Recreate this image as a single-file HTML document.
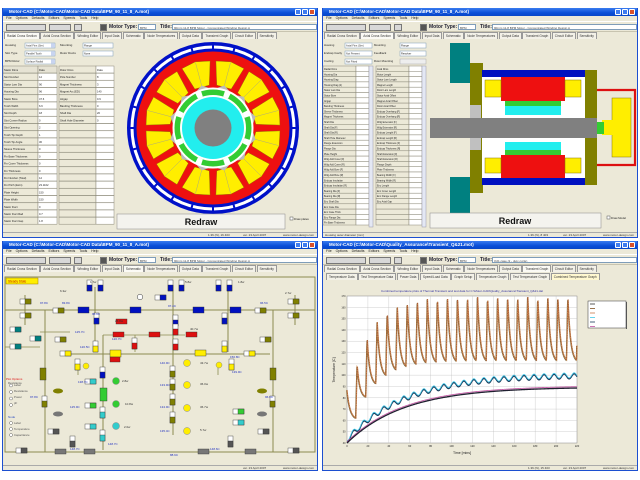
<!DOCTYPE html>
<html><head><meta charset="utf-8">
<style>
*{margin:0;padding:0;box-sizing:border-box}
body{width:640px;height:480px;background:#fff;position:relative;overflow:hidden;font-family:"Liberation Sans",sans-serif}
.q{position:absolute;width:320px;height:240px}
.w{position:absolute;left:2px;width:316px;height:230px;background:#ece9d8;border:1px solid #1c4fd0;border-top:none;overflow:hidden}
.tb{position:absolute;left:0;top:0;width:100%;height:8px;background:linear-gradient(#3a7cf0,#0a4fd8 60%,#0846c8);color:#fff;font-size:4.5px;font-weight:bold;line-height:8px;padding-left:6px;white-space:nowrap}
.tb i{position:absolute;top:1px;width:6px;height:6px;background:#3f7df0;border:0.5px solid #fff;border-radius:1px}
.tb i.x{background:#d8502c}
.mn{position:absolute;top:8px;left:0;width:100%;height:5px;font-size:3.5px;line-height:5px;padding-left:3px;color:#222;word-spacing:3px}
.tl{position:absolute;top:13px;left:0;width:100%;height:11px;border-top:1px solid #fff;border-bottom:1px solid #c8c4b0}
.ic{position:absolute;top:2px;height:7px;background:#d8d8d8;border:0.5px solid #777}
.tl b{position:absolute;top:2px;font-size:5px;line-height:7px;color:#223}
.inp{position:absolute;top:2px;height:6px;background:#fff;border:0.5px solid #7f9db9;font-size:3px;line-height:6px;padding-left:1px;color:#444;white-space:nowrap;overflow:hidden}
.tabs{position:absolute;top:24px;left:1px;height:7px;white-space:nowrap;font-size:3.2px;line-height:6px}
.tabs span{display:inline-block;border:0.5px solid #999;border-bottom:none;padding:0 2px;margin-right:0.5px;height:7px;background:#f3f1e8;color:#333}
.tabs span.a{background:#fbfaf5}
.st{position:absolute;top:224px;left:0;width:100%;height:5px;border-top:0.5px solid #aaa;font-size:3px;line-height:5px;color:#333}
svg{position:absolute;left:0;top:0}
</style></head><body>

<div class="q" style="left:0;top:0">
<div class="w" style="top:8px">
<div class="tb">Motor-CAD (C:\Motor-CAD\Motor-CAD Data\BPM_90_11_8_A.mot)<i style="right:16px"></i><i style="right:9px"></i><i class="x" style="right:2px"></i></div>
<div class="mn">File Options Defaults Editors Speeds Tools Help</div>
<div class="tl"><span class="ic" style="left:3px;width:40px"></span><span class="ic" style="left:46px;width:22px"></span><span class="ic" style="left:71px;width:8px"></span><span class="ic" style="left:97px;width:7px;background:#555"></span><b style="left:106px">Motor Type:</b><span class="inp" style="left:135px;width:18px">BPM</span><b style="left:157px">Title:</b><span class="inp" style="left:169px;width:145px">90mm 11-8 BPM Motor - Concentrated Winding Design A</span></div>
<div class="tabs"><span class="a">Radial Cross Section</span><span>Axial Cross Section</span><span>Winding Editor</span><span>Input Data</span><span>Schematic</span><span>Node Temperatures</span><span>Output Data</span><span>Transient Graph</span><span>Circuit Editor</span><span>Sensitivity</span></div>
<div class="st"><span style="position:absolute;left:205px">1.36 (N), 16 403</span><span style="position:absolute;left:240px">ver. 23 April 2007</span><span style="position:absolute;left:280px">www.motor-design.com</span></div>
</div>
<svg id="s1" width="320" height="240"></svg>
</div>

<div class="q" style="left:320px;top:0">
<div class="w" style="top:8px">
<div class="tb">Motor-CAD (C:\Motor-CAD\Motor-CAD Data\BPM_90_11_8_A.mot)<i style="right:16px"></i><i style="right:9px"></i><i class="x" style="right:2px"></i></div>
<div class="mn">File Options Defaults Editors Speeds Tools Help</div>
<div class="tl"><span class="ic" style="left:3px;width:40px"></span><span class="ic" style="left:46px;width:22px"></span><span class="ic" style="left:71px;width:8px"></span><span class="ic" style="left:97px;width:7px;background:#555"></span><b style="left:106px">Motor Type:</b><span class="inp" style="left:135px;width:18px">BPM</span><b style="left:157px">Title:</b><span class="inp" style="left:169px;width:145px">90mm 11-8 BPM Motor - Concentrated Winding Design A</span></div>
<div class="tabs"><span>Radial Cross Section</span><span class="a">Axial Cross Section</span><span>Winding Editor</span><span>Input Data</span><span>Schematic</span><span>Node Temperatures</span><span>Output Data</span><span>Transient Graph</span><span>Circuit Editor</span><span>Sensitivity</span></div>
<div class="st"><span style="position:absolute;left:2px">Housing outer diameter [mm]</span><span style="position:absolute;left:205px">1.36 (N), 8 403</span><span style="position:absolute;left:240px">ver. 23 April 2007</span><span style="position:absolute;left:280px">www.motor-design.com</span></div>
</div>
<svg id="s2" width="320" height="240"></svg>
</div>

<div class="q" style="left:0;top:240px">
<div class="w" style="top:1px">
<div class="tb">Motor-CAD (C:\Motor-CAD\Motor-CAD Data\BPM_90_11_8_A.mot)<i style="right:16px"></i><i style="right:9px"></i><i class="x" style="right:2px"></i></div>
<div class="mn">File Options Defaults Editors Speeds Tools Help</div>
<div class="tl"><span class="ic" style="left:3px;width:40px"></span><span class="ic" style="left:46px;width:22px"></span><span class="ic" style="left:71px;width:8px"></span><span class="ic" style="left:97px;width:7px;background:#555"></span><b style="left:106px">Motor Type:</b><span class="inp" style="left:135px;width:18px">BPM</span><b style="left:157px">Title:</b><span class="inp" style="left:169px;width:145px">90mm 11-8 BPM Motor - Concentrated Winding Design A</span></div>
<div class="tabs"><span>Radial Cross Section</span><span>Axial Cross Section</span><span>Winding Editor</span><span>Input Data</span><span class="a">Schematic</span><span>Node Temperatures</span><span>Output Data</span><span>Transient Graph</span><span>Circuit Editor</span><span>Sensitivity</span></div>
<div class="st"><span style="position:absolute;left:240px">ver. 23 April 2007</span><span style="position:absolute;left:280px">www.motor-design.com</span></div>
</div>
<svg id="s3" width="320" height="240"></svg>
</div>

<div class="q" style="left:320px;top:240px">
<div class="w" style="top:1px">
<div class="tb">Motor-CAD (C:\Motor-CAD\Quality_Assurance\Transient_Q&amp;21.mot)<i style="right:16px"></i><i style="right:9px"></i><i class="x" style="right:2px"></i></div>
<div class="mn">File Options Defaults Editors Speeds Tools Help</div>
<div class="tl"><span class="ic" style="left:3px;width:40px"></span><span class="ic" style="left:46px;width:22px"></span><span class="ic" style="left:71px;width:8px"></span><span class="ic" style="left:97px;width:7px;background:#555"></span><b style="left:106px">Motor Type:</b><span class="inp" style="left:135px;width:18px">BPM</span><b style="left:157px">Title:</b><span class="inp" style="left:169px;width:145px">Q21 case (2 - duty cycle)</span></div>
<div class="tabs"><span>Radial Cross Section</span><span>Axial Cross Section</span><span>Winding Editor</span><span>Input Data</span><span>Schematic</span><span>Node Temperatures</span><span>Output Data</span><span class="a">Transient Graph</span><span>Circuit Editor</span><span>Sensitivity</span></div>
<div class="tabs" style="top:32px;left:3px"><span>Temperature Data</span><span>Test Temperature Data</span><span>Power Data</span><span>Speed/Load Data</span><span>Graph Setup</span><span>Temperature Graph</span><span>Test Temperature Graph</span><span class="a" style="background:#fff8d0">Combined Temperature Graph</span></div>
<div class="st"><span style="position:absolute;left:205px">1.36 (N), 15 403</span><span style="position:absolute;left:240px">ver. 23 April 2007</span><span style="position:absolute;left:280px">www.motor-design.com</span></div>
</div>
<svg id="s4" width="320" height="240"><text x="142" y="52" font-size="3" fill="#3030a0" text-anchor="middle">Combined temperature plots of Thermal Transient and test data for C:\Motor-CAD\Quality_Assurance\Transient_Q&amp;21.dat</text><text x="142" y="214" font-size="3.5" fill="#222" text-anchor="middle">Time [mins]</text><text x="15" y="130" font-size="3.5" fill="#222" transform="rotate(-90 15 130)" text-anchor="middle">Temperature [C]</text><text x="276" y="65" font-size="2.8">Flange (Motor-CAD)</text><text x="276" y="69.5" font-size="2.8">Housing (Motor-CAD)</text><text x="276" y="74" font-size="2.8">Winding (Motor-CAD)</text><text x="276" y="78.5" font-size="2.8">Winding [TEST]</text><text x="276" y="83" font-size="2.8">Housing [TEST]</text><text x="276" y="87.5" font-size="2.8">Flange [TEST]</text></svg>
</div>

<script>
var NS="http://www.w3.org/2000/svg";
function E(s,t,a){var e=document.createElementNS(NS,t);for(var k in a)e.setAttribute(k,a[k]);s.appendChild(e);return e}
function R(s,x,y,w,h,f,st,sw){return E(s,"rect",{x:x,y:y,width:w,height:h,fill:f||"none",stroke:st||"none","stroke-width":sw||0.5})}
function C(s,x,y,r,f,st,sw){return E(s,"circle",{cx:x,cy:y,r:r,fill:f||"none",stroke:st||"none","stroke-width":sw||0.5})}
function L(s,x1,y1,x2,y2,c,w){return E(s,"line",{x1:x1,y1:y1,x2:x2,y2:y2,stroke:c,"stroke-width":w||0.6})}
function T(s,x,y,t,sz,c,a){var e=E(s,"text",{x:x,y:y,"font-size":sz||3,fill:c||"#222","text-anchor":a||"start"});e.textContent=t;return e}

var s=document.getElementById("s1");
var dd=[["Housing","Axial Fins (Ser)",43],["Slot Type","Parallel Tooth",51],["BPM Rotor","Surface Radial",59]];
dd.forEach(function(d){T(s,5,d[2]+3,d[0],3);R(s,25,d[2],30,5,"#fff","#7f9db9");T(s,26,d[2]+3.5,d[1],2.6,"#333");R(s,51,d[2]+0.5,4,4,"#c8d4f0")});
T(s,60,46,"Mounting",3);R(s,83,43,30,5,"#fff","#7f9db9");T(s,84,46.5,"Flange",2.6);T(s,60,54,"Rotor Ducts",3);R(s,83,51,30,5,"#fff","#7f9db9");T(s,84,54.5,"None",2.6);
var l1=["Stator Dims","Slot Number","Stator Lam Dia","Housing Dia","Stator Bore","Tooth Width","Slot Depth","Slot Corner Radius","Slot Opening","Tooth Tip Depth","Tooth Tip Angle","Sleeve Thickness","Fin Base Thickness","Fin Cover Thickness","Fin Thickness","Fin Number (Total)","Fin Pitch (Extn)","Plate Height","Plate Width","Stator Duct","Stator Duct Rad","Stator Duct Gap"];
var v1=["Data","12","90","96","47.6","6.6","18","0","2","1","30","0","0","0","0","12","23.1162","150","150","0","0.7","1.8"];
var l2=["Rotor Dims","Pole Number","Magnet Thickness","Magnet Arc [ED]","Airgap","Banding Thickness","Shaft Dia","Shaft Hole Diameter"];
var v2=["Data","8","3","140","0.9","0","20","0"];
for(var i=0;i<22;i++){var y=66+i*7.2;
R(s,3,y,35,7,i?"#ece9d8":"#e6e3d4","#8a8878");R(s,38,y,19,7,i?"#fff":"#e6e3d4","#8a8878");T(s,4,y+5,l1[i],2.7);T(s,39,y+5,v1[i],2.7);
R(s,59,y,37,7,"#ece9d8","#8a8878");R(s,96,y,18,7,"#fff","#8a8878");if(i<8){T(s,60,y+5,l2[i],2.7);T(s,97,y+5,v2[i],2.7)}}
var cx=213,cy=128;
C(s,cx,cy,86,"#0010c8");C(s,cx,cy,82.5,"#fff");
for(var k=0;k<24;k++){var a=k*Math.PI/12;L(s,cx+79*Math.cos(a),cy+79*Math.sin(a),cx+83*Math.cos(a),cy+83*Math.sin(a),"#0010c8",2)}
C(s,cx,cy,79.5,"#0010c8");C(s,cx,cy,76.5,"#ee1010");
function P(r,a){return (cx+r*Math.cos(a)).toFixed(2)+","+(cy+r*Math.sin(a)).toFixed(2)}
for(var k=0;k<12;k++){var a0=(k*30+15)*Math.PI/180,h1=10*Math.PI/180,h2=12.5*Math.PI/180;
E(s,"polygon",{points:[P(43,a0-h1),P(67,a0-h2),P(68.5,a0),P(67,a0+h2),P(43,a0+h1)].join(" "),fill:"#ffee00",stroke:"#887700","stroke-width":0.4});
L(s,cx+43*Math.cos(a0),cy+43*Math.sin(a0),cx+68*Math.cos(a0),cy+68*Math.sin(a0),"#999",0.4);
E(s,"polygon",{points:[P(40.5,a0-0.15),P(44,a0),P(40.5,a0+0.15)].join(" "),fill:"#bbb"})}
C(s,cx,cy,40.5,"#fff");C(s,cx,cy,38.5,"#33cc33");
for(var k=0;k<8;k++){var a=(k*45+22.5)*Math.PI/180;E(s,"polygon",{points:[P(33,a-0.08),P(39,a-0.08),P(39,a+0.08),P(33,a+0.08)].join(" "),fill:"#fff"})}
C(s,cx,cy,33,"#fff");C(s,cx,cy,31,"#22eeee");C(s,cx,cy,18.5,"#808080");
R(s,117,214,168,15,"#f4f3ee","#888");T(s,201,225,"Redraw",9,"#111","middle").setAttribute("font-weight","bold");
R(s,290,217,3,3,"#fff","#555");T(s,294,220,"Draw plates",2.8);

s=document.getElementById("s2");
var dd2=[["Housing","Axial Fins (Ser)",43],["Endcap Cavity","Not Present",51],["Cooling","Not Fitted",59]];
dd2.forEach(function(d){T(s,4,d[2]+3,d[0],2.8);R(s,25,d[2],27,5,"#fff","#7f9db9");T(s,26,d[2]+3.5,d[1],2.6,"#333")});
T(s,54,46,"Mounting",2.8);R(s,80,43,26,5,"#fff","#7f9db9");T(s,81,46.5,"Flange",2.6);T(s,54,54,"Feedback",2.8);R(s,80,51,26,5,"#fff","#7f9db9");T(s,81,54.5,"Resolver",2.6);T(s,54,62,"Rotor Mounting",2.8);R(s,80,59,26,5,"#eee","#aaa");
var la=["Radial Dims","Housing Dia","Housing Diag","Housing Diag (2)","Stator Lam Dia","Stator Bore","Airgap","Banding Thickness","Sleeve Thickness","Magnet Thickness","Shaft Dia","Shaft Dia [F]","Shaft Dia [R]","Shaft Hole Diameter","Flange Extension","Flange Dia","Plate Height","Wdg Add Cover [F]","Wdg Add Cover [R]","Wdg Add Bore [F]","Wdg Add Bore [R]","Endcap Insulation","Endcap Insulation [R]","Bearing Dia [F]","Bearing Dia [R]","Enc Shaft Dia","Enc Case Dia","Enc Case Thick","Enc Flange Dia","Fin Base Thickness"];
var lb=["Axial Dims","Motor Length","Stator Lam Length","Magnet Length","Rotor Lam Length","Stator Axial Offset","Magnet Axial Offset","Rotor Axial Offset","Endcap Overhang [F]","Endcap Overhang [R]","Wdg Extension [F]","Wdg Extension [R]","Endcap Length [F]","Endcap Length [R]","Endcap Thickness [F]","Endcap Thickness [R]","Shaft Extension [F]","Shaft Extension [R]","Flange Depth","Plate Thickness","Bearing Width [F]","Bearing Width [R]","Enc Length","Enc Cover Length","Enc Flange Length","Enc Axial Gap"];
for(var i=0;i<30;i++){var y=66+i*5.3;
R(s,3,y,33,5.3,"#ece9d8","#8a8878");R(s,36,y,13,5.3,"#fff","#8a8878");T(s,4,y+4,la[i],2.4);
R(s,56,y,33,5.3,"#ece9d8","#8a8878");R(s,89,y,13,5.3,"#fff","#8a8878");if(lb[i])T(s,57,y+4,lb[i],2.4)}
R(s,49,66,4,161,"#e4e8f4","#99a");R(s,102,66,4,161,"#e4e8f4","#99a");
R(s,130,43,20,40,"#008080");R(s,130,177,20,36,"#008080");
R(s,150,63,13,130,"#808000");R(s,162,70,103,7,"#0010c0");R(s,162,178,103,7,"#0010c0");
R(s,162,77,103,101,"#fff");
R(s,181,77,64,24,"#ee1010");R(s,181,155,64,23,"#ee1010");
R(s,165,80,16,17,"#ffee00","#887700");R(s,245,80,16,17,"#ffee00","#887700");R(s,165,158,16,15,"#ffee00","#887700");R(s,245,158,16,15,"#ffee00","#887700");
R(s,185,101,56,5,"#33cc33");R(s,185,106,56,9,"#22eeee");R(s,185,142,56,8,"#22eeee");R(s,185,150,56,5,"#33cc33");
R(s,150,105,11,13,"#c0c0c0");R(s,150,138,11,12,"#c0c0c0");R(s,267,105,10,13,"#c0c0c0");R(s,267,138,10,12,"#c0c0c0");
R(s,265,70,12,115,"#808000");
R(s,110,118,167,20,"#808080");
E(s,"path",{d:"M277 90H315V165H277",fill:"none",stroke:"#dd1010","stroke-width":2.2});
R(s,292,98,19,59,"#ffee00","#887700");R(s,282,120,12,15,"#ffee00");R(s,277,122,7,12,"#33cc33");
R(s,110,213,171,15,"#f4f3ee","#888");T(s,195,224,"Redraw",9,"#111","middle").setAttribute("font-weight","bold");
R(s,287,216,3,3,"#fff","#555");T(s,291,219,"Draw Model",2.8);

s=document.getElementById("s3");
R(s,5,37,310,175,"none","#8b8b50",1);
R(s,6,38,32,6,"#ffee00","#a08000");T(s,8,42.5,"Steady State",3.2,"#c02000");
var O="#8b8b50";
L(s,5,70,315,70,O,1);L(s,45,70,45,212,O,1);L(s,273,70,273,212,O,1);L(s,62,114,270,114,O,1);L(s,173,45,173,195,O,1);
L(s,95,47,95,112,O,1);L(s,228,45,228,112,O,1);L(s,103,95,103,210,O,1);L(s,103,95,185,95,O,0.8);L(s,135,95,135,112,O,0.8);
L(s,5,55,5,85,O,1);L(s,25,55,25,85,O,1);L(s,295,55,295,85,O,1);L(s,315,55,315,85,O,1);
L(s,40,92,70,92,O,0.8);L(s,5,107,40,107,O,0.8);L(s,78,125,78,135,O,0.8);L(s,218,125,218,135,O,0.8);
function cmp(x,y,w,h,f){R(s,x,y,w,h,f,"#333",0.4)}
function vcmp(x,y,f){R(s,x,y,5,11,"#fff","#333",0.4);R(s,x,y+5,5,6,f,"#333",0.4)}
function hcmp(x,y,f){R(s,x,y,11,5,"#fff","#333",0.4);R(s,x+5,y,6,5,f,"#333",0.4)}
vcmp(87,40,"#0010c0");vcmp(98,40,"#0010c0");vcmp(168,40,"#0010c0");vcmp(179,40,"#0010c0");vcmp(216,40,"#0010c0");vcmp(227,40,"#0010c0");
hcmp(20,59,"#808000");hcmp(20,73,"#808000");hcmp(288,59,"#808000");hcmp(288,73,"#808000");
hcmp(53,68,"#808000");hcmp(255,68,"#808000");
cmp(78,67,11,6,"#0010c0");cmp(130,67,11,6,"#0010c0");cmp(193,67,11,6,"#0010c0");cmp(230,67,11,6,"#0010c0");
hcmp(155,55,"#0010c0");C(s,140,57,2.8,"#fff","#333");
vcmp(94,73,"#0010c0");vcmp(173,75,"#0010c0");vcmp(222,73,"#0010c0");vcmp(173,84,"#dd1010");
cmp(116,79,11,5,"#dd1010");cmp(113,92,11,5,"#dd1010");cmp(149,92,11,5,"#dd1010");cmp(186,92,11,5,"#dd1010");
vcmp(132,98,"#dd1010");vcmp(173,99,"#dd1010");vcmp(93,101,"#ffee00");vcmp(222,101,"#ffee00");
hcmp(10,87,"#008080");hcmp(10,104,"#008080");hcmp(30,96,"#008080");hcmp(55,97,"#808000");hcmp(260,97,"#808000");
hcmp(60,111,"#ffee00");hcmp(244,111,"#ffee00");cmp(110,110,11,7,"#ffee00");cmp(195,110,11,6,"#ffee00");cmp(110,117,10,5,"#dd1010");
vcmp(75,119,"#ffee00");vcmp(229,119,"#ffee00");C(s,86,126,3,"#ffee00","#888");C(s,219,125,3,"#ffee00","#888");
vcmp(100,127,"#0010c0");vcmp(170,126,"#808000");vcmp(170,139,"#808000");vcmp(170,154,"#808000");vcmp(170,172,"#808000");
C(s,187,123,3.5,"#ffee00","#888");C(s,187,145,3.5,"#ffee00","#888");C(s,187,168,3.5,"#ffee00","#888");C(s,187,191,3.5,"#ffee00","#888");
hcmp(85,139,"#33cccc");cmp(100,148,7,13,"#33cc33");hcmp(85,163,"#33cc33");hcmp(85,184,"#33cccc");vcmp(100,167,"#33cccc");vcmp(100,190,"#33cccc");
C(s,116,141,3.5,"#33cc33","#888");C(s,116,164,3.5,"#33cc33","#888");C(s,116,186,3.5,"#33cccc","#888");
cmp(40,128,6,12,"#808000");cmp(270,128,6,12,"#808000");vcmp(42,156,"#808000");vcmp(270,156,"#808000");
E(s,"ellipse",{cx:58,cy:151,rx:5,ry:2.5,fill:"#808000"});E(s,"ellipse",{cx:262,cy:151,rx:5,ry:2.5,fill:"#808000"});
E(s,"ellipse",{cx:58,cy:174,rx:5,ry:2.5,fill:"#777"});E(s,"ellipse",{cx:262,cy:174,rx:5,ry:2.5,fill:"#777"});
hcmp(48,189,"#555");hcmp(258,189,"#555");vcmp(70,196,"#555");vcmp(228,196,"#555");hcmp(233,169,"#33cc33");hcmp(233,180,"#33cccc");
hcmp(16,208,"#555");hcmp(288,208,"#555");cmp(55,209,11,5,"#777");cmp(84,209,11,5,"#777");cmp(198,209,11,5,"#777");cmp(245,209,11,5,"#777");
T(s,6,140,"Plot Options",3,"#dd1010");
["Resistance","Label","Resistance","Power","pF"].forEach(function(t,i){if(i)C(s,11,139+i*6.5,1.5,"#fff","#666");T(s,i?14:8,144+i*6-(i?4:0),t,2.8,"#555")});
T(s,8,178,"Node",3,"#3050c0");["Label","Temperature","Capacitance"].forEach(function(t,i){C(s,11,183+i*6,1.5,"#fff","#666");T(s,14,184+i*6,t,2.8,"#555")});
var bl=[[40,64,"97.8C"],[62,64,"83.8C"],[92,75,"95.9C"],[168,67,"97.4C"],[260,64,"96.5C"],[75,93,"125.7C"],[80,108,"120.5C"],[112,100,"120.7C"],[160,124,"140.9C"],[160,146,"133.9C"],[160,168,"134.9C"],[160,192,"135.4C"],[70,168,"125.9C"],[78,143,"138.7C"],[108,205,"148.7C"],[70,210,"148.7C"],[210,210,"148.6C"],[170,216,"88.9C"],[230,118,"150.8C"],[232,133,"139.9C"],[30,158,"97.8C"],[265,158,"96.6C"]];
bl.forEach(function(b){T(s,b[0],b[1],b[2],3,"#2030c0")});
[[90,43,"1.7w"],[185,43,"5.8w"],[238,43,"1.8w"],[115,82,"25.8w"],[190,90,"40.7w"],[200,124,"43.7w"],[200,145,"36.0w"],[200,168,"36.7w"],[200,191,"5.7w"],[122,142,"2.8w"],[125,165,"10.8w"],[124,188,"2.0w"],[60,52,"6.3w"],[285,54,"2.7w"]].forEach(function(b){T(s,b[0],b[1],b[2],3,"#333")});

s=document.getElementById("s4");
var x0=27,x1=257,y0=203,yt=56;
R(s,x0,yt,x1-x0,y0-yt,"#fff","#888");
for(var i=1;i<11;i++){var x=x0+i*(x1-x0)/11;L(s,x,yt,x,y0,"#bbb",0.35)}
for(var i=1;i<13;i++){var y=y0-i*(y0-yt)/13;L(s,x0,y,x1,y,"#bbb",0.35)}
for(var i=0;i<=11;i++)T(s,x0+i*(x1-x0)/11,207,""+i*20,2.6,"#222","middle");
for(var i=0;i<=13;i++)T(s,x0-1.5,y0-i*(y0-yt)/13+1,""+(i*10+40),2.5,"#222","end");
function X(t){return x0+t*(x1-x0)/220}
var Pd=9.6,d1="";
function pk(k){return 57+68*Math.exp(-k/2)}
function tr(k){return 120+58*Math.exp(-k/2.2)}
for(var t=0;t<=220;t+=0.25){var y;
var k=Math.floor((t-8.5)/Pd);
if(k<0){y=150+28*(1-Math.exp(-t/3))/(1-Math.exp(-8.5/3))}
else{var ts=8.5+k*Pd,dt=t-ts;if(dt<1.3){y=tr(k)+(pk(k)-tr(k))*dt/1.3}else{var tn=tr(k+1),f=(1-Math.exp(-(dt-1.3)/2.6))/(1-Math.exp(-(Pd-1.3)/2.6));y=pk(k)+(tn-pk(k))*f}}
d1+=(t?"L":"M")+X(t).toFixed(2)+" "+y.toFixed(2);}
E(s,"path",{d:d1,fill:"none",stroke:"#5a5020","stroke-width":0.6,transform:"translate(-0.6,0.5)"});
E(s,"path",{d:d1,fill:"none",stroke:"#c88850","stroke-width":1.2});
E(s,"path",{d:d1,fill:"none",stroke:"#a05030","stroke-width":0.9,"stroke-dasharray":"0.7 1"});
var d3="",d4="",d5="";
for(var t=0;t<=220;t+=0.5){var yc=200-65*(1-Math.exp(-t/55))+2.5*Math.sin((t-8.5)*2*Math.PI/Pd);
var yd=203-56*(1-Math.exp(-t/55));
d3+=(t?"L":"M")+X(t).toFixed(2)+" "+yc.toFixed(2);d4+=(t?"L":"M")+X(t).toFixed(2)+" "+yd.toFixed(2);d5+=(t?"L":"M")+X(t).toFixed(2)+" "+(yd-1.3).toFixed(2)}
E(s,"path",{d:d3,fill:"none",stroke:"#1a3a5a","stroke-width":1.3});
E(s,"path",{d:d3,fill:"none",stroke:"#40c8e8","stroke-width":0.8,transform:"translate(0,-1)"});
E(s,"path",{d:d5,fill:"none",stroke:"#c050a0","stroke-width":0.8});
E(s,"path",{d:d4,fill:"none",stroke:"#202030","stroke-width":1.3});
R(s,268,61,38,27,"#fff","#333",0.5);R(s,306,62,1,27,"#555");
var lc=["#333","#805020","#c87848","#40c8e8","#1a3a5a","#c050a0"];
lc.forEach(function(c,i){L(s,270,64+i*4.5,275,64+i*4.5,c,0.8)});
</script>
</body></html>
